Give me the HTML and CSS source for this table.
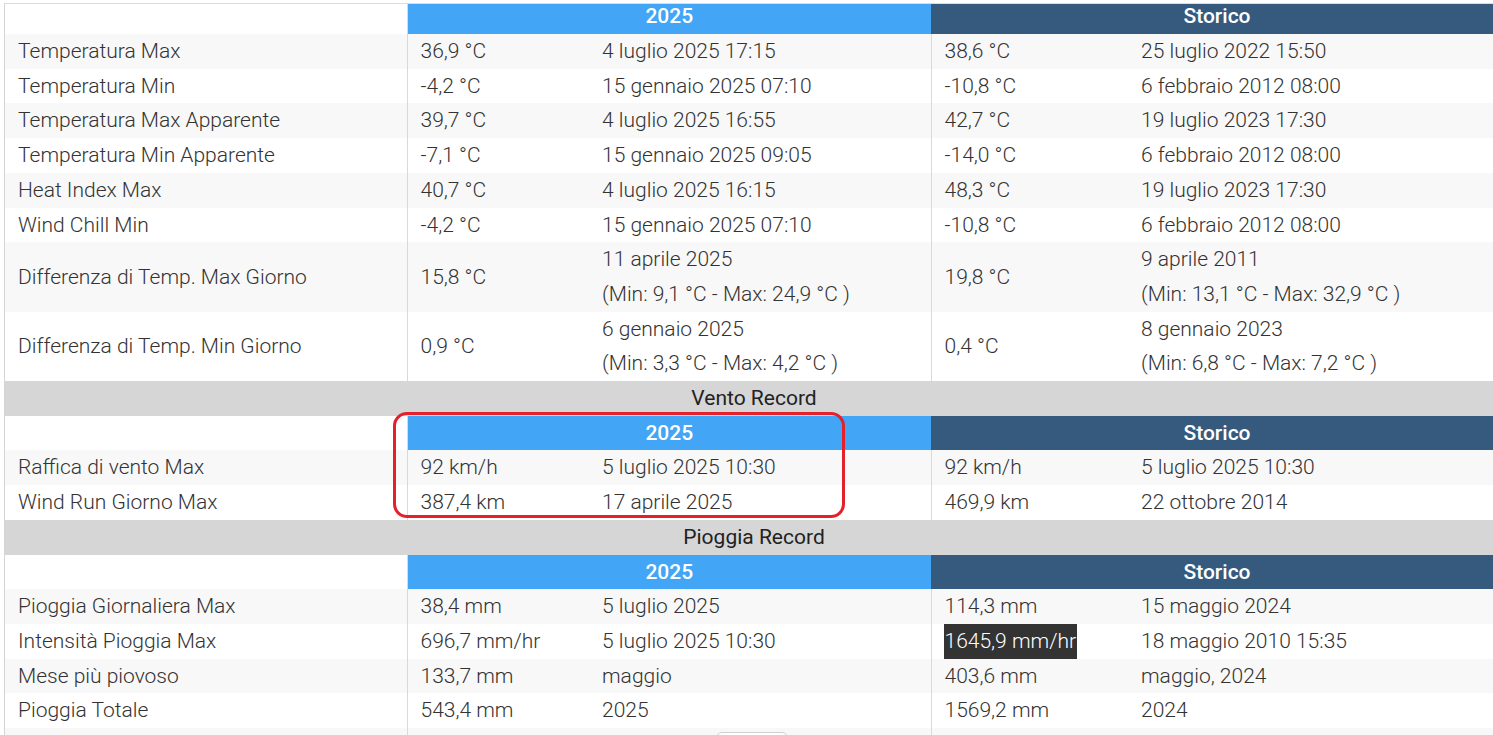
FILE: index.html
```html
<!DOCTYPE html>
<html lang="it">
<head>
<meta charset="utf-8">
<title>Record</title>
<link rel="stylesheet" href="styles.css">
</head>
<body>
<div class="page">
  <div class="frame">
    <table class="records">
      <colgroup>
        <col class="c-label">
        <col class="c-val">
        <col class="c-date">
        <col class="c-hval">
        <col class="c-hdate">
      </colgroup>
      <tbody>
        <tr class="head first">
          <th class="blank"></th>
          <th colspan="2" class="year">2025</th>
          <th colspan="2" class="hist">Storico</th>
        </tr>
        <tr class="odd"><td class="lbl">Temperatura Max</td><td>36,9 °C</td><td class="sep">4 luglio 2025 17:15</td><td>38,6 °C</td><td>25 luglio 2022 15:50</td></tr>
        <tr><td class="lbl">Temperatura Min</td><td>-4,2 °C</td><td class="sep">15 gennaio 2025 07:10</td><td>-10,8 °C</td><td>6 febbraio 2012 08:00</td></tr>
        <tr class="odd"><td class="lbl">Temperatura Max Apparente</td><td>39,7 °C</td><td class="sep">4 luglio 2025 16:55</td><td>42,7 °C</td><td>19 luglio 2023 17:30</td></tr>
        <tr><td class="lbl">Temperatura Min Apparente</td><td>-7,1 °C</td><td class="sep">15 gennaio 2025 09:05</td><td>-14,0 °C</td><td>6 febbraio 2012 08:00</td></tr>
        <tr class="odd"><td class="lbl">Heat Index Max</td><td>40,7 °C</td><td class="sep">4 luglio 2025 16:15</td><td>48,3 °C</td><td>19 luglio 2023 17:30</td></tr>
        <tr><td class="lbl">Wind Chill Min</td><td>-4,2 °C</td><td class="sep">15 gennaio 2025 07:10</td><td>-10,8 °C</td><td>6 febbraio 2012 08:00</td></tr>
        <tr class="odd"><td class="lbl">Differenza di Temp. Max Giorno</td><td>15,8 °C</td><td class="sep">11 aprile 2025<br>(Min: 9,1 °C - Max: 24,9 °C )</td><td>19,8 °C</td><td>9 aprile 2011<br>(Min: 13,1 °C - Max: 32,9 °C )</td></tr>
        <tr><td class="lbl">Differenza di Temp. Min Giorno</td><td>0,9 °C</td><td class="sep">6 gennaio 2025<br>(Min: 3,3 °C - Max: 4,2 °C )</td><td>0,4 °C</td><td>8 gennaio 2023<br>(Min: 6,8 °C - Max: 7,2 °C )</td></tr>

        <tr class="section"><th colspan="5">Vento Record</th></tr>
        <tr class="head">
          <th class="blank"></th>
          <th colspan="2" class="year">2025</th>
          <th colspan="2" class="hist">Storico</th>
        </tr>
        <tr class="odd"><td class="lbl">Raffica di vento Max</td><td>92 km/h</td><td class="sep">5 luglio 2025 10:30</td><td>92 km/h</td><td>5 luglio 2025 10:30</td></tr>
        <tr><td class="lbl">Wind Run Giorno Max</td><td>387,4 km</td><td class="sep">17 aprile 2025</td><td>469,9 km</td><td>22 ottobre 2014</td></tr>

        <tr class="section"><th colspan="5">Pioggia Record</th></tr>
        <tr class="head">
          <th class="blank"></th>
          <th colspan="2" class="year">2025</th>
          <th colspan="2" class="hist">Storico</th>
        </tr>
        <tr class="odd"><td class="lbl">Pioggia Giornaliera Max</td><td>38,4 mm</td><td class="sep">5 luglio 2025</td><td>114,3 mm</td><td>15 maggio 2024</td></tr>
        <tr><td class="lbl">Intensità Pioggia Max</td><td>696,7 mm/hr</td><td class="sep">5 luglio 2025 10:30</td><td class="hl-cell"><span class="hl">1645,9 mm/hr</span></td><td>18 maggio 2010 15:35</td></tr>
        <tr class="odd"><td class="lbl">Mese più piovoso</td><td>133,7 mm</td><td class="sep">maggio</td><td>403,6 mm</td><td>maggio, 2024</td></tr>
        <tr><td class="lbl">Pioggia Totale</td><td>543,4 mm</td><td class="sep">2025</td><td>1569,2 mm</td><td>2024</td></tr>
        <tr class="odd"><td class="lbl">&nbsp;</td><td></td><td class="sep"></td><td></td><td></td></tr>
      </tbody>
    </table>
    <div class="callout"></div>
    <div class="totop"></div>
  </div>
</div>
</body>
</html>
```

FILE: styles.css
```css
html, body {
  margin: 0;
  padding: 0;
  background: #ffffff;
}

body {
  font-family: Roboto, "Liberation Sans", sans-serif;
  color: #333333;
  overflow: hidden;
}

.page {
  width: 1493px;
  height: 735px;
  overflow: hidden;
  padding: 3px 0 0 4px;
  box-sizing: border-box;
}

.frame {
  position: relative;
  width: 1499px;
  border-top: 1px solid #dcdcdc;
  border-left: 1px solid #d4d4d4;
}

.records {
  width: 1498px;
  border-collapse: collapse;
  table-layout: fixed;
  font-size: 21px;
  font-weight: 300;
}

.c-label { width: 402px; }
.c-val { width: 182px; }
.c-date { width: 342px; }
.c-hval { width: 197px; }
.c-hdate { width: auto; }

.records td {
  padding: 0 0 0 13px;
  line-height: 34.7px;
  vertical-align: middle;
  white-space: nowrap;
}

.records td.lbl {
  padding-left: 13px;
  border-right: 1px solid #d9d9d9;
}

.records td.sep {
  border-right: 1px solid #d9d9d9;
}

.records tr.odd td {
  background: #f8f8f8;
}

.head th {
  height: 34.7px;
  padding: 0;
  font-weight: 500;
  font-size: 21px;
  color: #ffffff;
  text-align: center;
  line-height: 34.7px;
}

.head.first th {
  height: 30px;
  line-height: 24px;
  vertical-align: top;
}

.head th.blank {
  background: #ffffff;
  border-right: 1px solid #d9d9d9;
}

.head th.year {
  background: #42a5f5;
}

.head th.hist {
  background: #365a7e;
}

.section th {
  background: #d6d6d6;
  color: #222222;
  font-weight: 400;
  font-size: 21px;
  text-align: center;
  line-height: 34.7px;
  padding: 0;
}

.records td.hl-cell {
  padding-left: 13px;
}

.hl {
  display: inline-block;
  background: #333333;
  color: #ffffff;
  padding: 0 1px;
  margin-left: -1px;
  line-height: 34.7px;
}

.callout {
  position: absolute;
  left: 388px;
  top: 408px;
  width: 446px;
  height: 100px;
  border: 3px solid #e4202a;
  border-radius: 14px;
  pointer-events: none;
}

.totop {
  position: absolute;
  left: 711px;
  top: 728px;
  width: 70px;
  height: 30px;
  border: 1px solid #cfcfcf;
  border-radius: 6px;
  background: #ffffff;
}
```
